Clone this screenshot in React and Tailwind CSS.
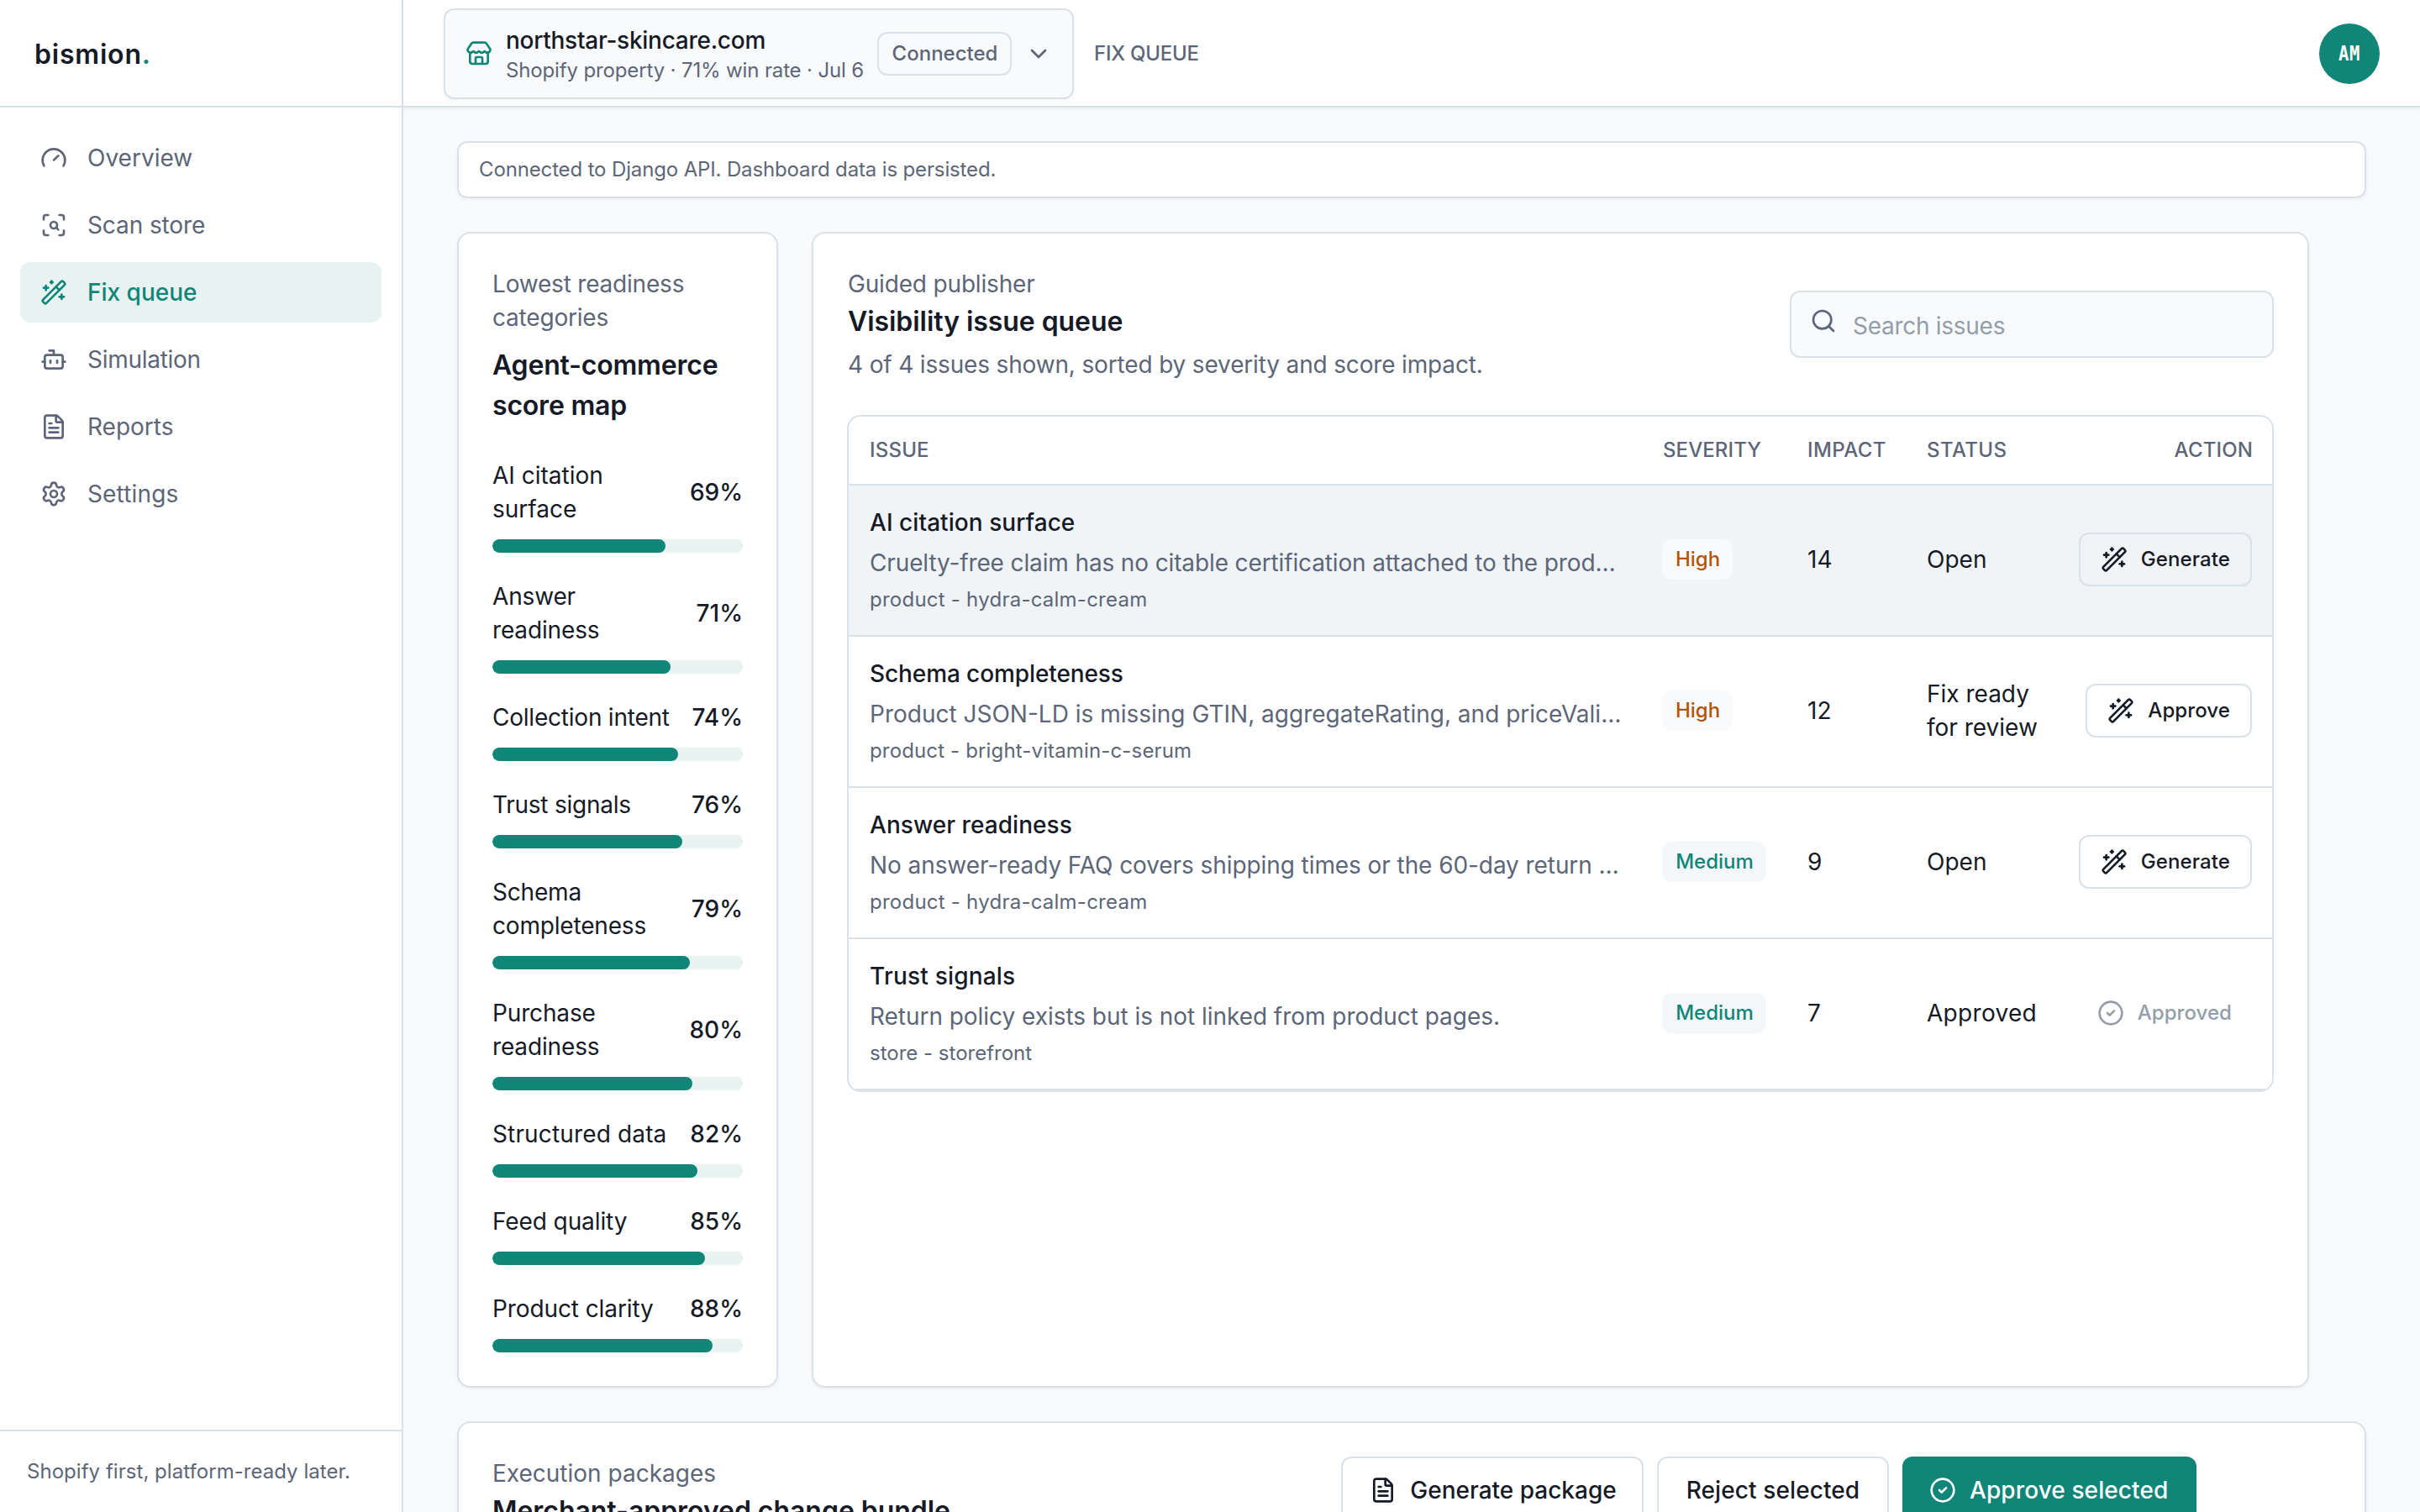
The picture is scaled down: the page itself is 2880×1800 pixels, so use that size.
import {
  Bot, ChevronDown, CircleCheck, FileText, Gauge, ScanSearch, Search, Settings, Store, WandSparkles,
} from "lucide-react";

const NAV = [
  { label: "Overview", icon: Gauge },
  { label: "Scan store", icon: ScanSearch, track: "tracking-[-0.1px]" },
  { label: "Fix queue", icon: WandSparkles, active: true },
  { label: "Simulation", icon: Bot, track: "tracking-[-0.28px]" },
  { label: "Reports", icon: FileText },
  { label: "Settings", icon: Settings, track: "tracking-[0.15px]" },
];

const SCORES = [
  { label: "AI citation surface", value: 69 },
  { label: "Answer readiness", value: 71, track: "tracking-[-0.15px]" },
  { label: "Collection intent", value: 74, track: "tracking-[-0.22px]" },
  { label: "Trust signals", value: 76, track: "tracking-[-0.25px]" },
  { label: "Schema completeness", value: 79, track: "tracking-[-0.18px]" },
  { label: "Purchase readiness", value: 80, track: "tracking-[-0.15px]" },
  { label: "Structured data", value: 82, track: "tracking-[0.15px]" },
  { label: "Feed quality", value: 85, track: "tracking-[-0.1px]" },
  { label: "Product clarity", value: 88, track: "tracking-[-0.1px]" },
];

const ISSUES = [
  {
    title: "AI citation surface", titleTrack: "tracking-[0.05px]",
    text: "Cruelty-free claim has no citable certification attached to the prod…", textTrack: "tracking-[-0.13px]",
    ref: "product - hydra-calm-cream", refTrack: "tracking-[0.24px]",
    severity: "High", impact: 14, status: "Open", action: "Generate", selected: true,
  },
  {
    title: "Schema completeness", titleTrack: "tracking-[-0.1px]",
    text: "Product JSON-LD is missing GTIN, aggregateRating, and priceVali…", textTrack: "tracking-normal",
    ref: "product - bright-vitamin-c-serum", refTrack: "tracking-[0.15px]",
    severity: "High", impact: 12, status: "Fix ready for review", action: "Approve",
  },
  {
    title: "Answer readiness", titleTrack: "tracking-[0.05px]",
    text: "No answer-ready FAQ covers shipping times or the 60-day return …", textTrack: "tracking-[-0.08px]",
    ref: "product - hydra-calm-cream", refTrack: "tracking-[0.24px]",
    severity: "Medium", impact: 9, status: "Open", action: "Generate",
  },
  {
    title: "Trust signals", titleTrack: "tracking-[0.2px]",
    text: "Return policy exists but is not linked from product pages.", textTrack: "tracking-[-0.04px]",
    ref: "store - storefront", refTrack: "tracking-normal",
    severity: "Medium", impact: 7, status: "Approved", statusTrack: "tracking-[0.3px]", action: "Approved", done: true,
  },
];

const GRID = "grid grid-cols-[944px_172px_142px_182px_254px]";
const CARD = "rounded-[16px] border-2 border-[#d9e1e9] bg-white shadow-[0_2px_4px_rgba(22,34,51,0.05)]";
// Section titles sit one pixel lower in their line without taking more space.
const HEADING = "pt-px -mb-px text-[32px] leading-[48px] font-semibold";

function Sidebar() {
  return (
    <aside className="flex w-[480px] shrink-0 flex-col border-r-2 border-[#d9e1e9] bg-white">
      <div className="flex h-[128px] items-center border-b-2 border-[#d9e1e9] pt-[3px] pr-10 pl-[41px] text-[32px] font-semibold tracking-[0.8px]">
        <span>bismion<span className="text-[#108578]">.</span></span>
      </div>
      <nav className="flex flex-1 flex-col gap-2 p-6">
        {NAV.map(({ label, icon: Icon, active, track }) => (
          <a
            key={label}
            className={
              active
                ? "flex h-[72px] items-center gap-6 rounded-[12px] bg-[#e8f2f1] px-6 font-medium text-[#108578]"
                : "flex h-[72px] items-center gap-6 rounded-[12px] px-6 text-[#5c6678]"
            }
          >
            <Icon size={32} />
            <span className={track}>{label}</span>
          </a>
        ))}
      </nav>
      <div className="border-t-2 border-[#d9e1e9] p-8 text-[24px] leading-[32px] tracking-[0.04px] text-[#5c6678]">
        Shopify first, platform-ready later.
      </div>
    </aside>
  );
}

function TopBar() {
  return (
    <header className="flex h-[128px] shrink-0 items-center justify-between border-b-2 border-[#d9e1e9] bg-white px-12 pt-0.5 shadow-[0_2px_4px_rgba(22,34,51,0.05)]">
      <div className="flex items-center gap-6">
        <button className="flex h-[108px] w-[750px] items-center gap-4 rounded-[12px] border-2 border-[#d9e1e9] bg-[#f8fafc] px-6 text-left shadow-[0_2px_4px_rgba(22,34,51,0.05)]">
          <Store size={32} className="shrink-0 text-[#108578]" />
          <span className="flex min-w-0 flex-1 flex-col whitespace-nowrap">
            <span className="font-medium leading-[40px] tracking-[-0.27px]">northstar-skincare.com</span>
            <span className="text-[24px] leading-[32px] tracking-[-0.14px] text-[#5c6678]">
              Shopify property · 71% win rate · Jul 6
            </span>
          </span>
          <span className="flex h-[52px] w-[160px] shrink-0 items-center justify-center rounded-[12px] border-2 border-[#d9e1e9] pl-px text-[24px] font-medium text-[#5c6678]">
            Connected
          </span>
          <ChevronDown size={32} className="shrink-0 text-[#5c6678]" />
        </button>
        <span className="text-[24px] font-medium tracking-[-0.22px] text-[#5c6678]">FIX QUEUE</span>
      </div>
      <div className="flex size-[72px] items-center justify-center rounded-full bg-[#108578] text-white">
        <span className="scale-x-[0.82] font-['DejaVu_Sans_Mono',monospace] text-[25px] font-bold tracking-[1px]">AM</span>
      </div>
    </header>
  );
}

function ScoreMap() {
  return (
    <section className={`${CARD} w-[382px] shrink-0 p-10`}>
      <p className="tracking-[-0.2px] text-[#5c6678]">Lowest readiness categories</p>
      <h2 className={`${HEADING} mt-3 tracking-[-0.2px]`}>Agent-commerce score map</h2>
      <div className="mt-10 flex flex-col gap-8">
        {SCORES.map(({ label, value, track }) => (
          <div key={label}>
            <div className="flex items-center justify-between gap-4">
              <span className={track}>{label}</span>
              <span className="font-medium">{value}%</span>
            </div>
            <div className="mt-4 h-4 overflow-hidden rounded-full bg-[#e8f2f1]">
              <div className="h-full rounded-full bg-[#108578]" style={{ width: `${value}%` }} />
            </div>
          </div>
        ))}
      </div>
    </section>
  );
}

function Severity({ level }) {
  return (
    <span
      className={
        level === "High"
          ? "flex h-12 w-[84px] items-center justify-center rounded-[12px] bg-[#f8fafc] pl-px text-[24px] leading-[32px] font-medium text-[#b45309]"
          : "flex h-12 w-[124px] items-center justify-center rounded-[12px] bg-[#f4f7f9] pl-px text-[24px] leading-[32px] font-medium text-[#108578]"
      }
    >
      {level}
    </span>
  );
}

function Action({ issue }) {
  if (issue.done) {
    return (
      <span className="flex h-16 items-center gap-4 px-6 text-[24px] font-medium tracking-[0.05px] text-[#929ea9]">
        <CircleCheck size={32} />
        {issue.action}
      </span>
    );
  }
  return (
    <button className="flex h-16 items-center gap-4 rounded-[12px] border-2 border-[#d9e1e9] px-6 text-[24px] font-medium tracking-[0.1px]">
      <WandSparkles size={32} />
      {issue.action}
    </button>
  );
}

function IssueQueue() {
  return (
    <section className={`${CARD} w-[1782px] shrink-0 p-10`}>
      <div className="flex items-center justify-between">
        <div className="pl-px">
          <p className="tracking-[-0.17px] text-[#5c6678]">Guided publisher</p>
          <h2 className={`${HEADING} tracking-[-0.06px]`}>Visibility issue queue</h2>
          <p className="mt-2 tracking-[-0.16px] text-[#5c6678]">
            4 of 4 issues shown, sorted by severity and score impact.
          </p>
        </div>
        <div className="flex h-20 w-[576px] rounded-[12px] border-2 border-[#d9e1e9] bg-[#f8fafc] px-[22px]">
          <Search size={32} className="mt-[18px] shrink-0 text-[#5c6678]" />
          <span className="pt-5 pl-[19px] tracking-[-0.28px] text-[#929ea9]">Search issues</span>
        </div>
      </div>
      <div className="mt-10 overflow-hidden rounded-[16px] border-2 border-[#d9e1e9]">
        <div className={`${GRID} h-[82px] items-center border-b-2 border-[#d9e1e9] text-[24px] font-medium text-[#5c6678]`}>
          <span className="pl-[25px] tracking-[0.2px]">ISSUE</span>
          <span className="pl-[25px] tracking-[0.1px]">SEVERITY</span>
          <span className="pl-[25px] tracking-[0.4px]">IMPACT</span>
          <span className="pl-[25px] tracking-[0.4px]">STATUS</span>
          <span className="pr-[23px] text-right tracking-[0.15px]">ACTION</span>
        </div>
        {ISSUES.map((issue) => (
          <div
            key={issue.title}
            className={
              issue.selected
                ? `${GRID} h-[180px] items-center border-b-2 border-[#d9e1e9] bg-[#f0f4f7] pb-0.5`
                : `${GRID} h-[180px] items-center border-b-2 border-[#d9e1e9] pb-0.5`
            }
          >
            <div className="flex flex-col gap-2 pl-[25px]">
              <p className={`font-medium ${issue.titleTrack}`}>{issue.title}</p>
              <p className={`whitespace-nowrap text-[#5c6678] ${issue.textTrack}`}>{issue.text}</p>
              <p className={`text-[24px] leading-[32px] text-[#5c6678] ${issue.refTrack}`}>{issue.ref}</p>
            </div>
            <div className="flex px-6"><Severity level={issue.severity} /></div>
            <div className="pl-[25px]">{issue.impact}</div>
            <div className={`pr-[23px] pl-[25px] ${issue.statusTrack ?? ""}`}>{issue.status}</div>
            <div className="flex justify-end px-6"><Action issue={issue} /></div>
          </div>
        ))}
      </div>
    </section>
  );
}

function Packages() {
  return (
    <section className={`${CARD} flex h-[400px] shrink-0 items-start justify-between py-10 pr-[200px] pl-10`}>
      <div>
        <p className="text-[#5c6678]">Execution packages</p>
        <h2 className={`${HEADING} tracking-[-0.04px]`}>Merchant-approved change bundle</h2>
      </div>
      <div className="flex gap-4 font-medium whitespace-nowrap">
        <button className="flex h-20 w-[360px] items-center justify-center gap-4 rounded-[12px] border-2 border-[#d9e1e9] pl-0.5">
          <FileText size={32} />
          Generate package
        </button>
        <button className="flex h-20 w-[276px] items-center justify-center rounded-[12px] border-2 border-[#d9e1e9] tracking-[0.1px]">
          Reject selected
        </button>
        <button className="flex h-20 w-[350px] items-center gap-4 rounded-[12px] bg-[#108578] pl-8 tracking-[0.1px] text-white">
          <CircleCheck size={32} />
          Approve selected
        </button>
      </div>
    </section>
  );
}

export default function App() {
  return (
    <div className="flex h-[1800px] w-[2880px] overflow-hidden bg-[#f8fafc] font-['Inter',sans-serif] text-[28px] leading-[40px] text-[#161a27]">
      <Sidebar />
      <div className="flex min-w-0 flex-1 flex-col">
        <TopBar />
        <main className="flex min-h-0 flex-1 flex-col gap-10 overflow-hidden px-16 pt-10">
          <div className="shrink-0 rounded-[12px] border-2 border-[#d9e1e9] bg-white px-6 py-4 text-[24px] leading-[32px] tracking-[-0.14px] text-[#5c6678] shadow-[0_2px_4px_rgba(22,34,51,0.05)]">
            Connected to Django API. Dashboard data is persisted.
          </div>
          <div className="flex shrink-0 gap-10">
            <ScoreMap />
            <IssueQueue />
          </div>
          <Packages />
        </main>
      </div>
    </div>
  );
}
